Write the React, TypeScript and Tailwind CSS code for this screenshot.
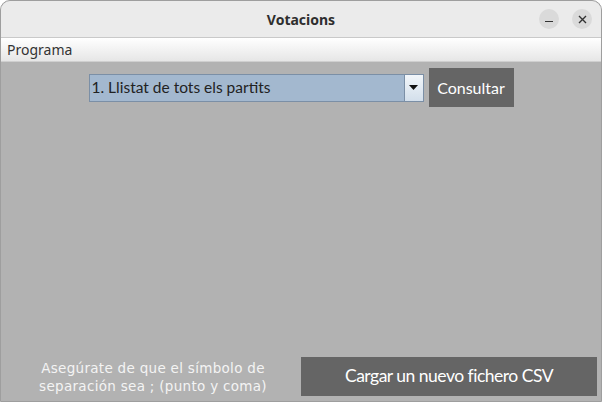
const App = () => {
  return (
    <div className="w-[602px] h-[402px] overflow-hidden bg-[#b2b2b2] flex flex-col rounded-t-[10px] border border-[#9e9e9e] font-['Noto_Sans',sans-serif]">
      {/* Title bar */}
      <div className="h-[37px] shrink-0 bg-[#ebebeb] border-b border-[#c9c9c9] relative flex items-center justify-center">
        <span className="text-[14px] font-bold text-[#2e2e2e] font-['Noto_Sans',sans-serif]">Votacions</span>
        <div className="absolute right-[9px] top-[8px] flex gap-[13px]">
          <button className="w-[20px] h-[20px] rounded-full bg-[#dadada] flex items-center justify-center">
            <span className="block w-[8px] h-[1.5px] bg-[#333] mt-[5px]"></span>
          </button>
          <button className="w-[20px] h-[20px] rounded-full bg-[#dadada] flex items-center justify-center">
            <svg width="9" height="9" viewBox="0 0 9 9">
              <path d="M1 1L8 8M8 1L1 8" stroke="#333" strokeWidth="1.4" />
            </svg>
          </button>
        </div>
      </div>

      {/* Menu bar */}
      <div className="h-[24px] shrink-0 bg-gradient-to-b from-[#ffffff] to-[#e6e6e6] border-b border-[#cfcfcf] flex items-center px-[6px]">
        <span className="text-[14px] text-[#333] leading-none">Programa</span>
      </div>

      {/* Content */}
      <div className="flex-1 flex flex-col px-[4px] pb-[5px]">
        <div className="flex justify-center items-center gap-[5px] pt-[6px]">
          <div className="w-[335px] h-[28px] flex border border-[#7b8fa6] bg-[#a3b8cf]">
            <div className="flex-1 flex items-center px-[2px] text-[15.5px] text-[#222] font-['Lato',sans-serif]">
              1. Llistat de tots els partits
            </div>
            <div className="w-[19px] border-l border-[#7b8fa6] bg-gradient-to-b from-[#f2f6fa] to-[#d3dfeb] flex items-center justify-center">
              <svg width="9" height="5" viewBox="0 0 9 5">
                <path d="M0 0H9L4.5 5Z" fill="#111" />
              </svg>
            </div>
          </div>
          <button className="w-[85px] h-[39px] bg-[#656565] text-white text-[16px] font-['Lato',sans-serif]">
            Consultar
          </button>
        </div>

        <div className="flex-1"></div>

        <div className="flex items-center">
          <div className="w-[296px] text-center text-[13.5px] leading-[18px] text-[#f4f4f4] tracking-[0.3px] font-['DejaVu_Sans',sans-serif]">
            Asegúrate de que el símbolo de
            <br />
            separación sea ; (punto y coma)
          </div>
          <button className="w-[296px] h-[39px] bg-[#656565] text-white text-[17.5px] tracking-[-0.5px] font-['Lato',sans-serif]">
            Cargar un nuevo fichero CSV
          </button>
        </div>
      </div>
    </div>
  )
}

export default App
